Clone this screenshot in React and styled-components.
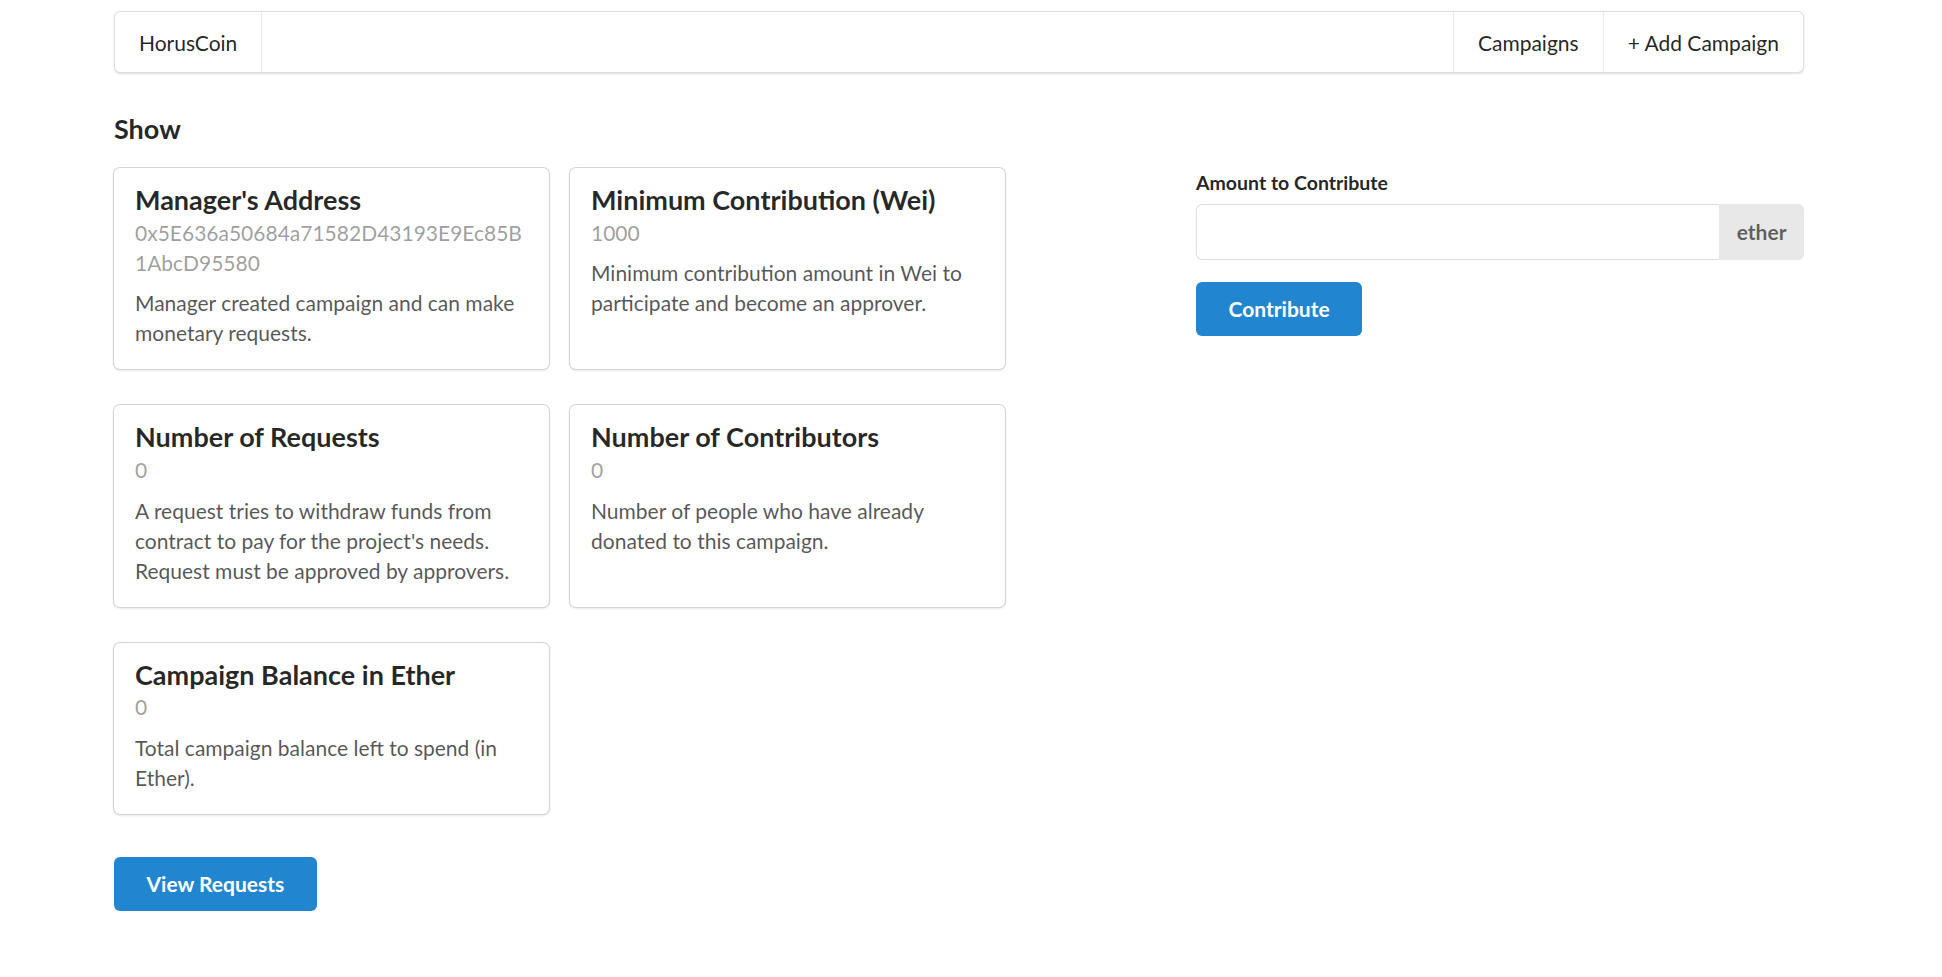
import React from 'react';
import styled, { createGlobalStyle } from 'styled-components';

const GlobalStyle = createGlobalStyle`
  html, body {
    margin: 0;
    padding: 0;
    background: #ffffff;
  }
  body {
    font-family: Lato, 'Helvetica Neue', Arial, Helvetica, sans-serif;
    font-size: 21px;
    line-height: 1.4285em;
    color: rgba(0, 0, 0, 0.87);
  }
  * {
    box-sizing: border-box;
  }
`;

const Container = styled.div`
  width: 1690px;
  margin: 0 0 0 114px;
  padding-top: 11px;
  padding-bottom: 40px;
`;

const Menu = styled.div`
  display: flex;
  min-height: 62px;
  background: #ffffff;
  border: 1px solid rgba(34, 36, 38, 0.15);
  border-radius: 6px;
  box-shadow: 0 1px 2px 0 rgba(34, 36, 38, 0.15);
`;

const MenuItem = styled.a`
  display: flex;
  align-items: center;
  padding: 19.5px 24px;
  line-height: 1;
  color: rgba(0, 0, 0, 0.87);
  text-decoration: none;
  cursor: pointer;
  ${props => props.$divider === 'right'
    ? 'border-right: 1px solid rgba(34, 36, 38, 0.1);'
    : 'border-left: 1px solid rgba(34, 36, 38, 0.1);'}
`;

const RightMenu = styled.div`
  display: flex;
  margin-left: auto;
`;

const Heading = styled.h3`
  margin: 39px 0 21px;
  font-size: 27px;
  font-weight: 700;
  line-height: 1.28571429em;
  color: rgba(0, 0, 0, 0.87);
`;

const Grid = styled.div`
  display: grid;
  grid-template-columns: 1040px 1fr;
  column-gap: 42px;
  align-items: start;
`;

const LeftColumn = styled.div`
  display: flex;
  flex-direction: column;
`;

const CardGroup = styled.div`
  display: flex;
  flex-wrap: wrap;
  gap: 36px 21px;
`;

const Card = styled.div`
  width: 435px;
  background: #ffffff;
  border-radius: 6px;
  box-shadow: 0 1px 3px 0 #d4d4d5, 0 0 0 1px #d4d4d5;
  padding: 21px;
`;

const CardHeader = styled.div`
  margin-top: -5.8px;
  font-size: 27px;
  font-weight: 700;
  line-height: 1.28571429em;
  color: rgba(0, 0, 0, 0.85);
`;

const CardMeta = styled.div`
  color: rgba(0, 0, 0, 0.4);
  word-break: break-all;
  overflow-wrap: anywhere;
`;

const CardDescription = styled.div`
  margin-top: 10.5px;
  color: rgba(0, 0, 0, 0.68);
`;

const ButtonRow = styled.div`
  margin-top: 43px;
`;

const Button = styled.button`
  display: inline-block;
  padding: 16.5px 32.5px;
  font-family: Lato, 'Helvetica Neue', Arial, Helvetica, sans-serif;
  font-size: 21px;
  font-weight: 700;
  line-height: 1;
  color: #ffffff;
  background: #2185d0;
  border: none;
  border-radius: 6px;
  cursor: pointer;
`;

const Form = styled.form`
  display: flex;
  flex-direction: column;
  align-items: flex-start;
`;

const Field = styled.div`
  width: 100%;
  margin-bottom: 22px;
`;

const Label = styled.label`
  display: block;
  margin: 0 0 6px;
  font-size: 19.5px;
  font-weight: 700;
  color: rgba(0, 0, 0, 0.87);
`;

const LabeledInput = styled.div`
  display: flex;
  width: 100%;
  height: 56px;
`;

const Input = styled.input`
  flex: 1;
  min-width: 0;
  margin: 0;
  padding: 14.25px 21px;
  font-family: Lato, 'Helvetica Neue', Arial, Helvetica, sans-serif;
  font-size: 21px;
  line-height: 1.21428571em;
  color: rgba(0, 0, 0, 0.87);
  background: #ffffff;
  border: 1px solid rgba(34, 36, 38, 0.15);
  border-right: none;
  border-radius: 6px 0 0 6px;
  outline: none;
`;

const InputLabel = styled.div`
  display: flex;
  align-items: center;
  padding: 0 17.5px;
  font-size: 21px;
  font-weight: 700;
  line-height: 1;
  color: rgba(0, 0, 0, 0.6);
  background: #e8e8e8;
  border-radius: 0 6px 6px 0;
`;

const summary = [
  {
    header: "Manager's Address",
    meta: '0x5E636a50684a71582D43193E9Ec85B1AbcD95580',
    description: 'Manager created campaign and can make monetary requests.',
  },
  {
    header: 'Minimum Contribution (Wei)',
    meta: '1000',
    description: 'Minimum contribution amount in Wei to participate and become an approver.',
  },
  {
    header: 'Number of Requests',
    meta: '0',
    description: "A request tries to withdraw funds from contract to pay for the project's needs. Request must be approved by approvers.",
  },
  {
    header: 'Number of Contributors',
    meta: '0',
    description: 'Number of people who have already donated to this campaign.',
  },
  {
    header: 'Campaign Balance in Ether',
    meta: '0',
    description: 'Total campaign balance left to spend (in Ether).',
  },
];

export default function App() {
  return (
    <>
      <GlobalStyle />
      <Container>
        <Menu>
          <MenuItem $divider="right">HorusCoin</MenuItem>
          <RightMenu>
            <MenuItem $divider="left">Campaigns</MenuItem>
            <MenuItem $divider="left">+ Add Campaign</MenuItem>
          </RightMenu>
        </Menu>

        <Heading>Show</Heading>

        <Grid>
          <LeftColumn>
            <CardGroup>
              {summary.map(item => (
                <Card key={item.header}>
                  <CardHeader>{item.header}</CardHeader>
                  <CardMeta>{item.meta}</CardMeta>
                  <CardDescription>{item.description}</CardDescription>
                </Card>
              ))}
            </CardGroup>
            <ButtonRow>
              <Button type="button">View Requests</Button>
            </ButtonRow>
          </LeftColumn>

          <Form onSubmit={e => e.preventDefault()}>
            <Field>
              <Label>Amount to Contribute</Label>
              <LabeledInput>
                <Input type="text" />
                <InputLabel>ether</InputLabel>
              </LabeledInput>
            </Field>
            <Button type="submit">Contribute</Button>
          </Form>
        </Grid>
      </Container>
    </>
  );
}
